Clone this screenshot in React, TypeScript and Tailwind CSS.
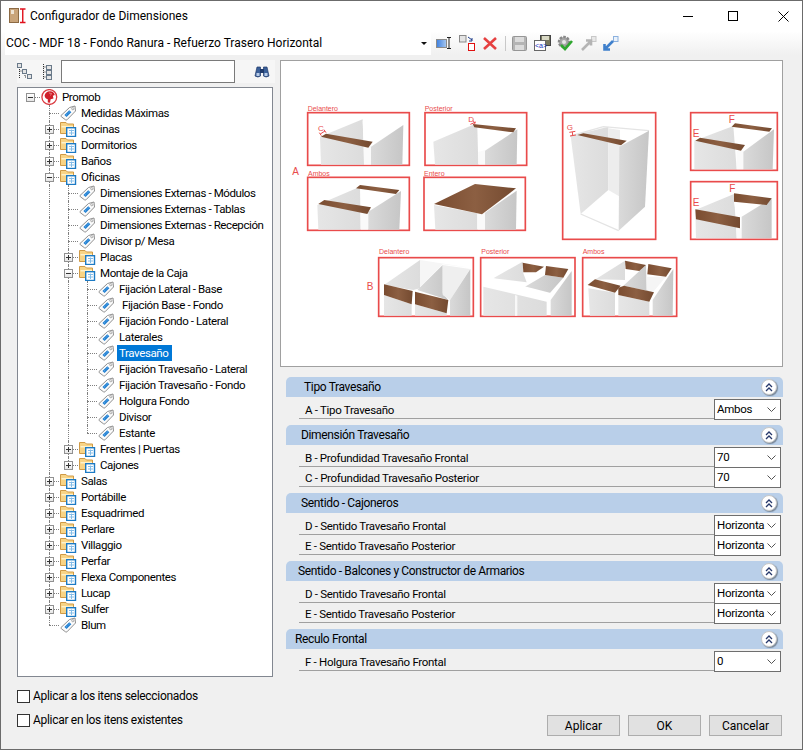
import React from "react";

type TreeNode = { t: string; kind: "root" | "folder" | "leaf"; open?: boolean; sel?: boolean; extra?: number; ch?: TreeNode[] };
const leaf = (t: string, sel?: boolean, extra?: number): TreeNode => ({ t, kind: "leaf", sel, extra });
const fold = (t: string, open?: boolean, ch?: TreeNode[]): TreeNode => ({ t, kind: "folder", open, ch });

const tree: TreeNode[] = [
  {
    t: "Promob", kind: "root", open: true, ch: [
      leaf("Medidas Máximas"),
      fold("Cocinas"), fold("Dormitorios"), fold("Baños"),
      fold("Oficinas", true, [
        leaf("Dimensiones Externas - Módulos"),
        leaf("Dimensiones Externas - Tablas"),
        leaf("Dimensiones Externas - Recepción"),
        leaf("Divisor p/ Mesa"),
        fold("Placas"),
        fold("Montaje de la Caja", true, [
          leaf("Fijación Lateral - Base"),
          leaf("Fijación Base - Fondo", false, 3),
          leaf("Fijación Fondo - Lateral"),
          leaf("Laterales"),
          leaf("Travesaño", true),
          leaf("Fijación Travesaño - Lateral"),
          leaf("Fijación Travesaño - Fondo"),
          leaf("Holgura Fondo"),
          leaf("Divisor"),
          leaf("Estante"),
        ]),
        fold("Frentes | Puertas"),
        fold("Cajones"),
      ]),
      fold("Salas"), fold("Portábille"), fold("Esquadrimed"), fold("Perlare"), fold("Villaggio"),
      fold("Perfar"), fold("Flexa Componentes"), fold("Lucap"), fold("Sulfer"),
      leaf("Blum"),
    ],
  },
];

type Row = { n: TreeNode; level: number; guides: number[]; last: boolean };
const flatten = (nodes: TreeNode[], level: number, guides: number[], out: Row[]) => {
  nodes.forEach((n, i) => {
    const last = i === nodes.length - 1;
    out.push({ n, level, guides, last });
    if (n.open && n.ch) flatten(n.ch, level + 1, level > 0 && !last ? [...guides, level] : guides, out);
  });
  return out;
};
const rows = flatten(tree, 0, [], []);

const TagIcon = () => (
  <svg width="17" height="16" viewBox="0 0 17 16" className="shrink-0">
    <path d="M1 10.5 L9.5 2.5 L15 1 L15.5 6 L7 14.8 Q6.3 15.3 5.5 14.8 L1.3 11.7 Q0.7 11 1 10.5Z" fill="#fbfbfb" stroke="#8f8f8f" />
    <circle cx="12.8" cy="3.7" r="1.1" fill="#fff" stroke="#8a8a8a" strokeWidth="0.7" />
    <path d="M5.5 11 L10.3 6.3" stroke="#1f7fd2" strokeWidth="3" />
    <path d="M6.3 10 L9.8 6.6" stroke="#9fd0f5" strokeWidth="0.8" strokeDasharray="1 1" />
  </svg>
);
const FolderIcon = () => (
  <svg width="17" height="16" viewBox="0 0 17 16" className="shrink-0">
    <path d="M0.5 1.5 H6 L7.5 3 H13.5 V12.5 H0.5Z" fill="#f8d486" stroke="#cf9a47" />
    <path d="M1.5 5 H13 V6.5 H1.5Z" fill="#fdf2cd" />
    <rect x="6.7" y="6.7" width="8.8" height="8.8" fill="#fff" stroke="#1c7ac4" strokeWidth="1.4" />
    <path d="M9 9.5 H14 M9 12 H14 M11.5 8.5 V14" stroke="#84bde8" strokeWidth="1" />
  </svg>
);
const RootIcon = () => (
  <svg width="17" height="16" viewBox="0 0 17 16" className="shrink-0">
    <circle cx="8.3" cy="8" r="7.4" fill="#fff" stroke="#da3a40" strokeWidth="1.3" />
    <path d="M3.6 6.5 Q4.5 2.5 9 2.3 Q13 2.5 13.8 6 L11.8 6.8 L12.5 9.5 L9.6 10.2 L9 13.8 L6.8 13.4 L6.8 10.2 Q3.8 9.5 3.6 6.5Z" fill="#cf1f2a" />
    <path d="M8 4 L10.5 4.5 L9.5 6.5" stroke="#f2a0a0" strokeWidth="0.7" fill="none" />
  </svg>
);
const Expander = ({ open }: { open?: boolean }) => (
  <span className="relative z-10 flex h-[9px] w-[9px] shrink-0 items-center justify-center border border-[#919191] bg-gradient-to-b from-white to-[#e6e6e6]">
    <span className="absolute h-px w-[5px] bg-[#333]" />
    {!open && <span className="absolute h-[5px] w-px bg-[#333]" />}
  </span>
);

const TreeRow = ({ r }: { r: Row }) => {
  const center = 12 + 19 * r.level;
  const hasExp = r.n.kind !== "leaf";
  return (
    <div className="relative flex h-4 items-center" style={{ paddingLeft: 8 + 19 * r.level }}>
      {r.guides.map((g) => (
        <span key={g} className="absolute top-0 h-4 w-0 border-l border-dotted border-[#808080]" style={{ left: 12 + 19 * g }} />
      ))}
      {r.level > 0 && (
        <span className={`absolute top-0 w-0 border-l border-dotted border-[#808080] ${r.last ? "h-2" : "h-4"}`} style={{ left: center }} />
      )}
      <span className="absolute top-2 h-0 w-[10px] border-t border-dotted border-[#808080]" style={{ left: center }} />
      {hasExp ? <Expander open={r.n.open} /> : <span className="w-[9px] shrink-0" />}
      <span className="relative z-10 ml-[6px] flex">
        {r.n.kind === "root" ? <RootIcon /> : r.n.kind === "folder" ? <FolderIcon /> : <TagIcon />}
      </span>
      <span
        className={`ml-[2px] flex h-4 items-center whitespace-pre pl-[2px] pr-[4px] text-[11.5px] tracking-[-0.4px] ${r.n.sel ? "bg-[#0078d7] text-white" : "text-black"}`}
        style={r.n.extra ? { marginLeft: 2 + r.n.extra } : undefined}
      >
        {r.n.t}
      </span>
    </div>
  );
};

const Combo = ({ v }: { v: string }) => (
  <div className="flex h-[21px] w-[67px] shrink-0 items-center border border-[#6e6e6e] bg-white pl-[2px]">
    <span className="w-[46px] whitespace-nowrap pb-px text-[11.5px] leading-[15px] tracking-[-0.3px] text-black">{v}</span>
    <svg width="9" height="5" viewBox="0 0 9 5" className="ml-[4px] shrink-0"><path d="M0.5 0.5 L4.5 4.5 L8.5 0.5" fill="none" stroke="#555" /></svg>
  </div>
);

const CollapseBtn = () => (
  <span className="flex h-[16px] w-[16px] items-center justify-center rounded-full border border-[#c8c8c8] bg-white shadow-[1px_1px_1px_rgba(0,0,0,0.35)]">
    <svg width="8" height="9" viewBox="0 0 8 9"><path d="M1 4 L4 1 L7 4 M1 8 L4 5 L7 8" fill="none" stroke="#26386b" strokeWidth="1.3" /></svg>
  </span>
);

const Group = ({ title, pad, items }: { title: string; pad: number; items: [string, string][] }) => (
  <div className="pb-[6px]">
    <div className="flex h-5 items-center justify-between rounded-t-[5px] bg-[#b9cfe9] pr-[6px] text-black" style={{ paddingLeft: pad }}>
      <span className="tracking-[-0.35px]">{title}</span>
      <CollapseBtn />
    </div>
    <div className="ml-[13px] mr-[2px] mt-[2px] flex flex-col">
      {items.map(([l, v]) => (
        <div key={l} className="flex h-5 items-start justify-between">
          <div className="flex h-5 flex-1 items-center border-b border-[#a0a0a0] pl-[6px] pt-[2px] text-[11.5px] tracking-[-0.3px] text-black">{l}</div>
          <Combo v={v} />
        </div>
      ))}
    </div>
  </div>
);

const Btn = ({ t }: { t: string }) => (
  <button className="flex h-[21px] w-[73px] items-center justify-center border border-[#adadad] bg-[#e1e1e1] text-black">{t}</button>
);

const Check = ({ t }: { t: string }) => (
  <div className="flex h-[14px] items-center">
    <span className="h-[13px] w-[13px] shrink-0 border border-[#333] bg-white" />
    <span className="ml-[3px] tracking-[-0.3px] text-black">{t}</span>
  </div>
);

const P = ({ d, f }: { d: string; f: string }) => <polygon points={d} fill={f} />;
const RED = "#e94b4b";
const Box = ({ x, y, w, h }: { x: number; y: number; w: number; h: number }) => (
  <rect x={x} y={y} width={w} height={h} fill="#fff" stroke={RED} strokeWidth="5" />
);
const L = ({ x, y, t, s = 21 }: { x: number; y: number; t: string; s?: number }) => (
  <text x={x} y={y} fontSize={s} fill={RED} fontFamily="'Liberation Sans', sans-serif">{t}</text>
);

const Preview = () => (
  <svg className="h-full w-full" viewBox="281 61 501 305">
    <defs>
      <linearGradient id="w" x1="0" y1="0" x2="1" y2="0"><stop offset="0" stopColor="#7a4c30" /><stop offset="0.5" stopColor="#8c5f42" /><stop offset="1" stopColor="#744a30" /></linearGradient>
      <linearGradient id="a" x1="0" y1="0" x2="1" y2="0"><stop offset="0" stopColor="#e6e6e6" /><stop offset="1" stopColor="#dcdcdc" /></linearGradient>
      <linearGradient id="b" x1="0" y1="0" x2="1" y2="0"><stop offset="0" stopColor="#dadada" /><stop offset="1" stopColor="#c6c6c6" /></linearGradient>
    </defs>

    <g transform="translate(290 90) scale(0.33333)">
      <Box x={53} y={68} w={305} h={158} />
      <P d="90,140 218,88 222,224 93,224" f="url(#a)" />
      <P d="218,92 340,110 243,170 222,175" f="#fff" />
      <P d="222,170 243,168 243,224 222,224" f="#fafafa" />
      <P d="243,170 340,105 337,224 243,224" f="url(#b)" />
      <P d="93,140 108,131 248,155 235,173" f="url(#w)" />
      <path d="M88 128 L94 137 M102 119 L108 128 M91 132 L105 123" stroke={RED} strokeWidth="3" />
      <L x={84} y={122} t="C" s={24} />
      <L x={53} y={63} t="Delantero" />

      <Box x={405} y={68} w={305} h={158} />
      <P d="430,155 548,105 562,112 565,224 435,224" f="url(#a)" />
      <P d="565,112 670,127 585,182 565,188" f="#fff" />
      <P d="565,186 585,180 585,224 565,224" f="#fafafa" />
      <P d="585,182 682,118 680,224 585,224" f="url(#b)" />
      <P d="548,102 678,115 670,127 553,112" f="url(#w)" />
      <path d="M541 103 L558 96 M550 92 L556 104" stroke={RED} strokeWidth="3" />
      <L x={535} y={95} t="D" s={24} />
      <L x={404} y={63} t="Posterior" />

      <Box x={53} y={262} w={305} h={159} />
      <P d="82,345 210,290 212,419 85,419" f="url(#a)" />
      <P d="212,366 235,362 235,419 212,419" f="#fafafa" />
      <P d="235,365 333,303 328,419 235,419" f="url(#b)" />
      <P d="85,342 103,330 243,352 232,372" f="url(#w)" />
      <P d="198,295 210,285 328,300 318,312" f="url(#w)" />
      <L x={54} y={257} t="Ambos" />

      <Box x={402} y={262} w={304} h={159} />
      <P d="432,345 562,370 562,419 436,419" f="url(#a)" />
      <P d="562,372 585,368 585,419 562,419" f="#fafafa" />
      <P d="585,368 680,302 678,419 585,419" f="url(#b)" />
      <P d="432,342 555,282 678,295 576,373" f="url(#w)" />
      <L x={402} y={257} t="Entero" />
      <L x={7} y={255} t="A" s={30} />
    </g>

    <g transform="translate(540 100) scale(0.33333)">
      <Box x={68} y={38} w={279} h={380} />
      <P d="92,108 205,80 205,270 122,342" f="url(#a)" />
      <P d="205,85 240,90 240,290 205,270" f="#ededed" />
      <path d="M122 342 L236 392 M92 108 L190 80 L327 92" stroke="#e4e4e4" strokeWidth="4" fill="none" />
      <P d="238,140 327,92 315,320 236,392" f="url(#b)" />
      <P d="112,105 130,100 260,122 243,136" f="url(#w)" />
      <path d="M88 97 L106 94 M97 96 L98 106 M90 108 L108 105" stroke={RED} strokeWidth="3" />
      <L x={80} y={90} t="G" s={24} />

      <Box x={452} y={38} w={260} h={173} />
      <P d="463,122 580,78 590,208 463,208" f="url(#a)" />
      <P d="590,90 690,92 610,155 590,155" f="#fff" />
      <P d="590,152 610,152 610,208 590,208" f="#fafafa" />
      <P d="610,155 702,88 698,208 610,208" f="url(#b)" />
      <P d="466,122 480,113 615,135 603,152" f="url(#w)" />
      <P d="575,80 585,70 696,85 688,95" f="url(#w)" />
      <L x={458} y={111} t="E" s={30} />
      <L x={566} y={70} t="F" s={30} />

      <Box x={452} y={245} w={260} h={173} />
      <P d="466,330 582,282 590,415 468,415" f="url(#a)" />
      <P d="582,305 685,315 605,352 590,350" f="#fff" />
      <P d="590,385 605,385 605,415 590,415" f="#fafafa" />
      <P d="605,350 695,295 695,415 605,415" f="url(#b)" />
      <P d="466,328 600,352 600,385 468,358" f="url(#w)" />
      <P d="582,280 695,295 680,315 582,305" f="url(#w)" />
      <L x={458} y={319} t="E" s={30} />
      <L x={568} y={277} t="F" s={30} />
    </g>

    <g transform="translate(360 245) scale(0.33333)">
      <L x={20} y={134} t="B" s={30} />
      <L x={57} y={28} t="Delantero" />
      <L x={364} y={28} t="Posterior" />
      <L x={668} y={28} t="Ambos" />

      <Box x={56} y={38} w={284} h={176} />
      <P d="72,120 180,45 180,130 160,135" f="url(#a)" />
      <P d="180,45 330,68 248,58 180,125" f="#f6f6f6" />
      <P d="172,135 248,60 248,145 265,165" f="url(#b)" />
      <P d="248,60 330,72 270,165 248,150" f="#efefef" />
      <P d="270,165 331,72 331,212 270,212" f="url(#b)" />
      <P d="72,150 155,178 155,212 72,212" f="url(#a)" />
      <P d="165,178 260,205 260,212 165,212" f="url(#a)" />
      <P d="72,118 158,138 155,178 72,150" f="url(#w)" />
      <P d="165,140 265,165 260,205 165,178" f="url(#w)" />

      <Box x={362} y={38} w={283} h={176} />
      <P d="400,100 488,50 490,85 500,112" f="url(#a)" />
      <P d="495,125 555,90 610,98 560,155" f="url(#b)" />
      <P d="370,125 560,170 560,212 370,212" f="url(#a)" />
      <P d="370,115 400,100 575,145 575,170" f="#fff" />
      <P d="465,150 472,152 472,212 465,212" f="#f8f8f8" />
      <P d="572,165 635,78 635,212 572,212" f="url(#b)" />
      <P d="488,53 552,65 528,82 490,82" f="url(#w)" />
      <P d="558,63 625,72 610,98 555,90" f="url(#w)" />

      <Box x={668} y={38} w={282} h={176} />
      <P d="683,118 795,47 795,105 705,103" f="url(#a)" />
      <P d="790,122 858,60 860,135 882,142" f="url(#b)" />
      <P d="860,95 918,95 880,140 860,135" f="#f5f5f5" />
      <P d="685,130 765,143 765,212 690,212" f="url(#a)" />
      <P d="775,150 868,170 868,212 775,212" f="url(#a)" />
      <P d="878,165 940,72 938,212 878,212" f="url(#b)" />
      <P d="795,47 858,60 838,78 797,72" f="url(#w)" />
      <P d="865,57 935,70 918,95 862,88" f="url(#w)" />
      <P d="683,120 705,103 782,122 765,143" f="url(#w)" />
      <P d="775,128 792,122 882,142 868,170 775,150" f="url(#w)" />
    </g>
  </svg>
);

export default function App() {
  return (
    <div className="flex h-[750px] w-[803px] flex-col border border-[#6b6b6b] bg-[#f0f0f0] text-[12px] leading-4 text-black" style={{ fontFamily: "Roboto, 'Noto Sans', sans-serif" }}>
      {/* title bar */}
      <div className="flex h-[30px] shrink-0 items-center bg-white">
        <svg width="18" height="18" viewBox="0 0 18 18" className="ml-[8px]">
          <rect x="0.5" y="1.5" width="9" height="14" fill="#c9a47a" stroke="#8c6a44" />
          <rect x="2" y="3" width="3" height="4" fill="#eee3d4" />
          <path d="M11 2 H16.5 M11 15.5 H16.5 M13.75 2 V15.5" stroke="#e0101c" strokeWidth="1.4" />
        </svg>
        <span className="ml-[3px]">Configurador de Dimensiones</span>
        <div className="ml-auto mr-[13px] flex items-center">
          <span className="mr-[35px] h-px w-[10px] bg-black" />
          <span className="mr-[40px] h-[10px] w-[10px] border border-black" />
          <svg width="11" height="11" viewBox="0 0 11 11"><path d="M0.5 0.5 L10.5 10.5 M10.5 0.5 L0.5 10.5" stroke="#000" /></svg>
        </div>
      </div>

      {/* main toolbar */}
      <div className="flex h-[24px] shrink-0 items-center bg-gradient-to-b from-white to-[#f0f0f0]">
        <div className="ml-[4px] flex h-[23px] w-[426px] items-center justify-between bg-white pl-px pr-[4px]">
          <span>COC - MDF 18 - Fondo Ranura - Refuerzo Trasero Horizontal</span>
          <svg width="6" height="3" viewBox="0 0 6 3"><path d="M0 0 H6 L3 3Z" fill="#111" /></svg>
        </div>
        <svg width="16" height="12" viewBox="0 0 16 12" className="ml-[5px]">
          <defs><linearGradient id="tb" x1="0" y1="0" x2="1" y2="0"><stop offset="0" stopColor="#3c7fe0" /><stop offset="1" stopColor="#a8c8f0" /></linearGradient></defs>
          <rect x="0.5" y="2.5" width="10" height="8" fill="url(#tb)" stroke="#8a8a8a" />
          <path d="M11 0.5 H15 M11 11.5 H15 M13 0.5 V11.5" stroke="#222" />
        </svg>
        <svg width="16" height="16" viewBox="0 0 16 16" className="ml-[7px]">
          <rect x="0.5" y="0.5" width="6.5" height="6.5" fill="#e4e4e4" stroke="#8a8a8a" />
          <rect x="9.5" y="8.5" width="6" height="7" fill="#fff" stroke="#e01010" />
          <path d="M9 2 L13 5 M13 3 V6 H10" stroke="#1a3a8a" fill="none" />
        </svg>
        <svg width="14" height="13" viewBox="0 0 14 13" className="ml-[8px]"><path d="M1 1 L13 12 M13 1 L1 12" stroke="#e64040" strokeWidth="2.6" /></svg>
        <span className="ml-[8px] h-[15px] w-px bg-[#c8c8c8]" />
        <svg width="15" height="15" viewBox="0 0 15 15" className="ml-[6px]">
          <rect x="0.5" y="0.5" width="14" height="14" rx="1" fill="#b4b4b4" stroke="#969696" />
          <rect x="3" y="1" width="9" height="5" fill="#dcdcdc" />
          <rect x="3" y="9" width="9" height="5" fill="#dcdcdc" />
        </svg>
        <svg width="17" height="16" viewBox="0 0 17 16" className="ml-[7px]">
          <rect x="6.5" y="0.5" width="10" height="10" fill="#77775e" stroke="#444" />
          <rect x="8" y="1" width="7" height="4" fill="#d8d8c4" />
          <rect x="0.5" y="5.5" width="11" height="10" fill="#fff" stroke="#666" />
          <text x="1" y="13" fontSize="7" fill="#1030c0" fontFamily="'Liberation Sans', sans-serif">&lt;a&gt;</text>
        </svg>
        <svg width="17" height="16" viewBox="0 0 17 16" className="ml-[6px]">
          <circle cx="7" cy="7" r="5" fill="#a8a8a8" stroke="#8a8a8a" strokeWidth="2.5" strokeDasharray="2.5 1.2" />
          <circle cx="7" cy="7" r="2" fill="#e8e8e8" />
          <path d="M4 10 L8 14 L15 6" fill="none" stroke="#2fa62f" strokeWidth="2.6" />
        </svg>
        <svg width="16" height="15" viewBox="0 0 16 15" className="ml-[7px]">
          <rect x="10.5" y="0.5" width="4.5" height="5" fill="#e8e8e8" stroke="#c8c8c8" />
          <path d="M1 14 L9 6 M5 4.5 H10 V9.5" stroke="#b4b4b4" strokeWidth="2.6" fill="none" />
        </svg>
        <svg width="16" height="15" viewBox="0 0 16 15" className="ml-[6px]">
          <rect x="10.5" y="0.5" width="4.5" height="5" fill="#eaf2fb" stroke="#8ab0de" />
          <path d="M10 5 L2 13 M1.5 8 V13.5 H7" stroke="#3f80cc" strokeWidth="2.6" fill="none" />
        </svg>
      </div>

      <div className="flex min-h-0 flex-1">
        {/* left column */}
        <div className="flex w-[279px] shrink-0 flex-col pl-[16px]">
          <div className="mt-[5px] flex h-[23px] w-[258px] items-center bg-[#f6f6f6]">
            <svg width="16" height="17" viewBox="0 0 16 17">
              <path d="M2.5 4 V15 M2.5 8 H6 M8 10 V14 H11" stroke="#333" strokeDasharray="1 1" fill="none" />
              <rect x="0.5" y="0.5" width="4" height="4" fill="#e4e4e4" stroke="#6a7a8a" />
              <rect x="5.5" y="6.5" width="4" height="4" fill="#e4e4e4" stroke="#6a7a8a" />
              <rect x="10.5" y="11.5" width="4" height="4" fill="#e4e4e4" stroke="#6a7a8a" />
            </svg>
            <svg width="12" height="17" viewBox="0 0 12 17" className="ml-[8px]">
              <path d="M2.5 1 V16 M2.5 4 H5 M2.5 9 H5 M2.5 14 H5" stroke="#333" strokeDasharray="1 1" />
              <rect x="5.5" y="2.5" width="5" height="4" fill="#e4e4e4" stroke="#6a7a8a" />
              <rect x="5.5" y="7.5" width="5" height="4" fill="#e4e4e4" stroke="#6a7a8a" />
              <rect x="5.5" y="12.5" width="5" height="4" fill="#e4e4e4" stroke="#6a7a8a" />
            </svg>
            <div className="ml-[8px] h-[23px] w-[174px] border border-[#7a7a7a] bg-white" />
            <svg width="16" height="13" viewBox="0 0 16 13" className="ml-[19px]">
              <path d="M1 11 L3 2 H6.5 V11 Q4 13 1 11Z M15 11 L13 2 H9.5 V11 Q12 13 15 11Z" fill="#3a5f98" stroke="#1f3a6a" strokeWidth="0.7" />
              <rect x="6" y="4" width="4" height="4" fill="#1f3a6a" />
              <rect x="2.5" y="8" width="3" height="3" fill="#b8cce8" />
              <rect x="10.5" y="8" width="3" height="3" fill="#b8cce8" />
            </svg>
          </div>
          <div className="mt-[4px] h-[590px] w-[256px] overflow-hidden border border-[#828790] bg-white pt-px">
            {rows.map((r) => <TreeRow key={r.n.t} r={r} />)}
          </div>
          <div className="mt-[12px]"><Check t="Aplicar a los itens seleccionados" /></div>
          <div className="mt-[10px]"><Check t="Aplicar en los itens existentes" /></div>
        </div>

        {/* right column */}
        <div className="flex w-[503px] shrink-0 flex-col">
          <div className="mt-[5px] h-[307px] w-[503px] border border-[#a0a0a0] bg-white">
            <Preview />
          </div>
          <div className="ml-[6px] mt-[10px] w-[497px]">
            <Group title="Tipo Travesaño" pad={18} items={[["A - Tipo Travesaño", "Ambos"]]} />
            <Group title="Dimensión Travesaño" pad={15} items={[["B - Profundidad Travesaño Frontal", "70"], ["C - Profundidad Travesaño Posterior", "70"]]} />
            <Group title="Sentido - Cajoneros" pad={15} items={[["D - Sentido Travesaño Frontal", "Horizonta"], ["E - Sentido Travesaño Posterior", "Horizonta"]]} />
            <Group title="Sentido - Balcones y Constructor de Armarios" pad={12} items={[["D - Sentido Travesaño Frontal", "Horizonta"], ["E - Sentido Travesaño Posterior", "Horizonta"]]} />
            <Group title="Reculo Frontal" pad={9} items={[["F - Holgura Travesaño Frontal", "0"]]} />
          </div>
          <div className="ml-[267px] mt-[38px] flex gap-[8px]">
            <Btn t="Aplicar" />
            <Btn t="OK" />
            <Btn t="Cancelar" />
          </div>
        </div>
      </div>
    </div>
  );
}
